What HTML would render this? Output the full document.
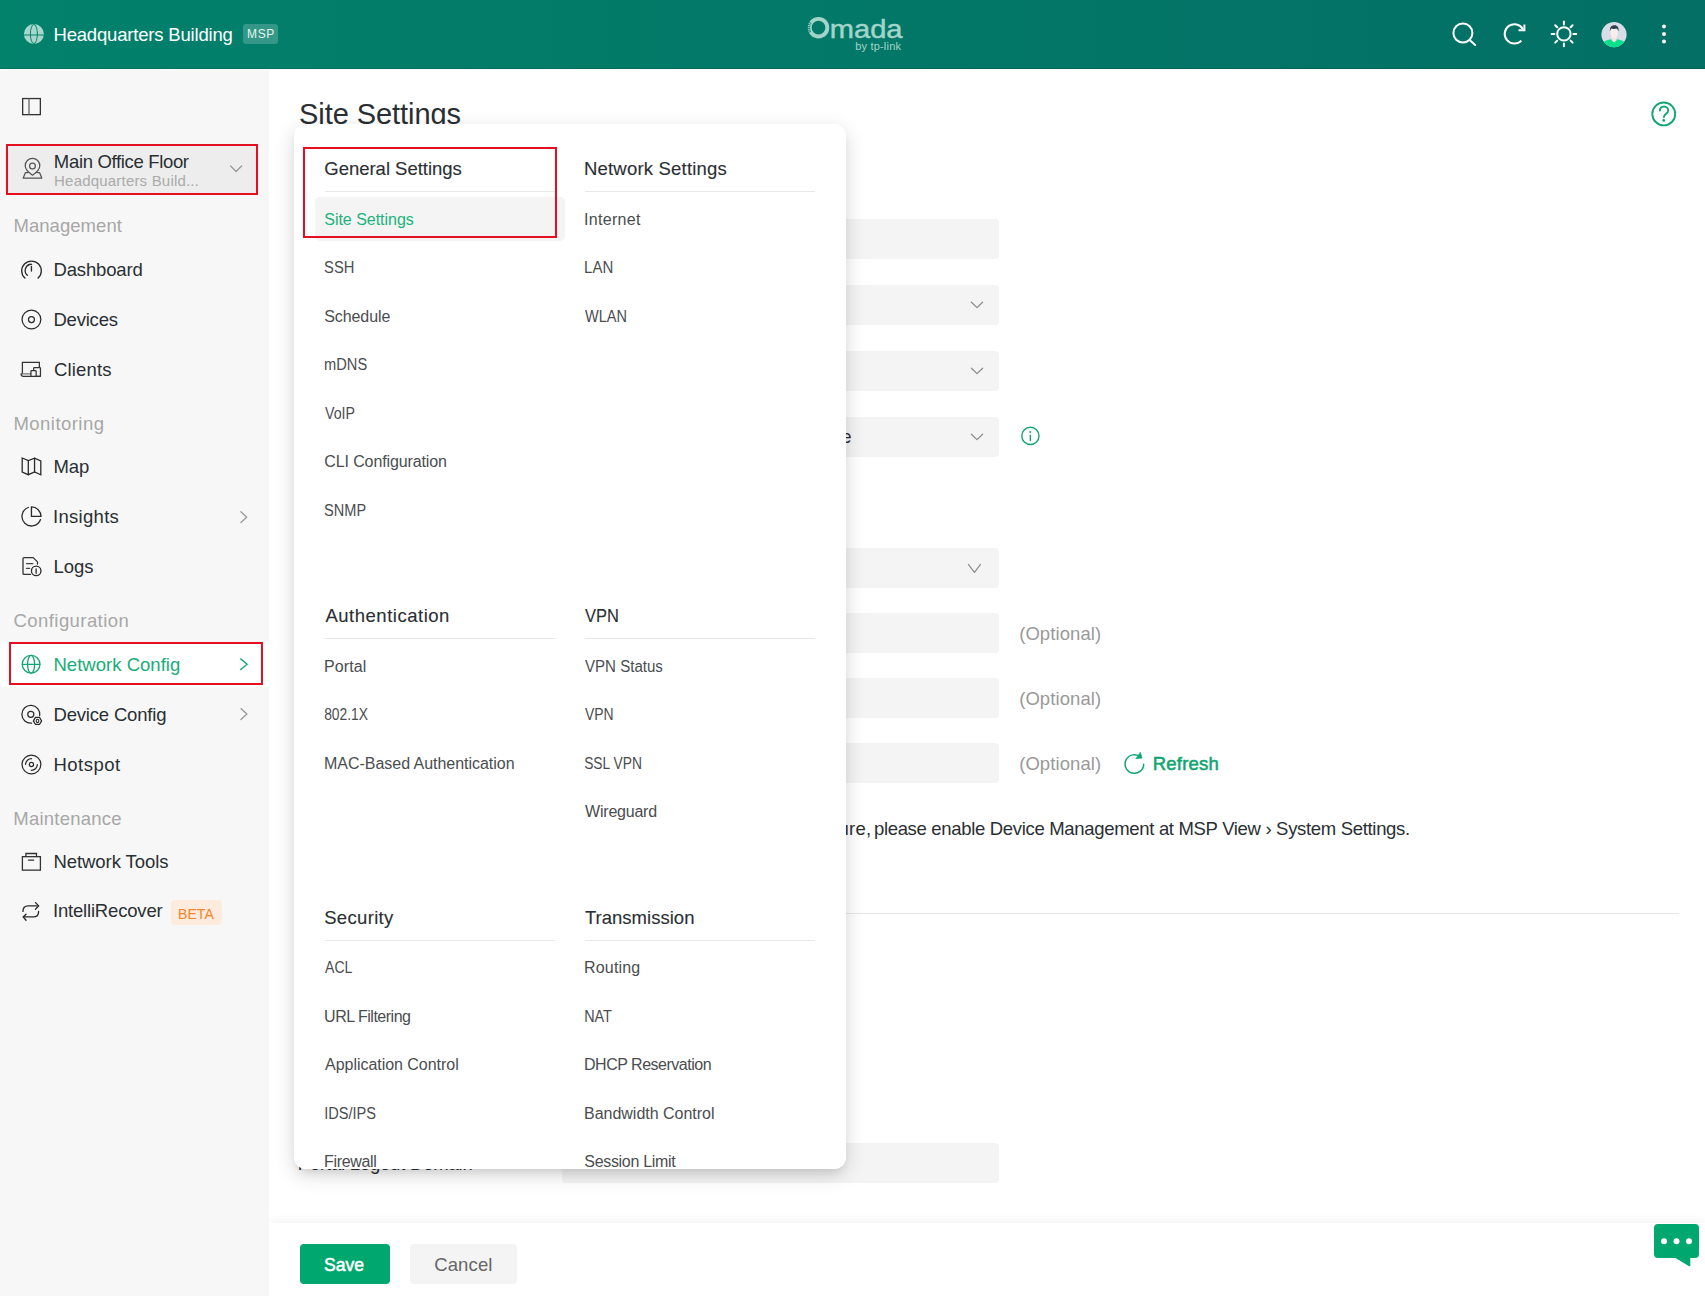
<!DOCTYPE html>
<html lang="en">
<head>
<meta charset="utf-8">
<title>Omada - Site Settings</title>
<style>
*{box-sizing:border-box;margin:0;padding:0}
html,body{width:1705px;height:1296px;overflow:hidden;background:#fff;font-family:"Liberation Sans",sans-serif}
.abs{position:absolute}
.t{position:absolute;white-space:pre;line-height:1;display:block}
#hdr{position:absolute;left:0;top:0;width:1705px;height:69px;background:linear-gradient(90deg,#02816b 0%,#036f65 100%);box-shadow:inset 0 -1px 0 rgba(0,0,0,.13)}
#side{position:absolute;left:0;top:70px;width:269px;height:1226px;background:#f7f7f7}
.red{position:absolute;border:2px solid #e60f21}
.fld{position:absolute;left:561.5px;width:437.5px;height:40px;background:#f4f4f4;border-radius:4px}
#pop{position:absolute;left:294px;top:124px;width:552px;height:1045px;background:#fff;border-radius:12px;overflow:hidden}
#popsh{position:absolute;left:294px;top:124px;width:552px;height:1045px;border-radius:12px;box-shadow:0 6px 8px -4px rgba(0,0,0,.10),0 6px 20px rgba(0,0,0,.16)}
.dv{position:absolute;height:1px;background:#e7e7e7;width:230px}
#foot{position:absolute;left:0;top:33px;width:1436px;height:74px;background:#fff;box-shadow:0 -3px 8px rgba(0,0,0,.045)}
svg{position:absolute;overflow:visible}
</style>
</head>
<body>
<!-- header -->
<div id="hdr"></div>
<!-- sidebar -->
<div id="side"></div>
<div class="abs" style="left:8px;top:146px;width:248px;height:47px;background:#ededed"></div>
<div class="red" style="left:6px;top:144px;width:252px;height:51px"></div>
<div class="abs" style="left:0;top:642px;width:269px;height:45px;background:#fff"></div>
<div class="red" style="left:9px;top:642px;width:254px;height:43px"></div>
<div class="abs" style="left:171px;top:900px;width:51px;height:25px;background:#fdebdd;border-radius:4px"></div>
<div class="abs" style="left:243px;top:24px;width:35px;height:20px;background:rgba(255,255,255,.2);border-radius:3px"></div>

<!-- main content behind popup -->
<div class="fld" style="top:219px"></div>
<div class="fld" style="top:285px"></div>
<div class="fld" style="top:351px"></div>
<div class="fld" style="top:417px"></div>
<div class="fld" style="top:548px"></div>
<div class="fld" style="top:613px"></div>
<div class="fld" style="top:678px"></div>
<div class="fld" style="top:743px"></div>
<div class="fld" style="top:1143px"></div>
<div class="abs" style="left:299px;top:913px;width:1380px;height:1px;background:#e8e8e8"></div>

<!-- footer -->
<div class="abs" style="left:269px;top:1190px;width:1436px;height:106px;overflow:hidden"><div id="foot"></div></div>
<div class="abs" style="left:300px;top:1244px;width:90px;height:40px;background:#00a870;border-radius:4px"></div>
<div class="abs" style="left:410px;top:1244px;width:107px;height:40px;background:#f4f4f4;border-radius:4px"></div>

<svg width="1705" height="1296" viewBox="0 0 1705 1296" style="left:0;top:0" fill="none" stroke-linecap="round" stroke-linejoin="round">
<!-- header: globe -->
<circle cx="33.9" cy="34" r="10" fill="#a6d6cc"/>
<ellipse cx="33.9" cy="34" rx="3.5" ry="9.6" stroke="#0a826c" stroke-width="1"/>
<path d="M24 35H43.8" stroke="#0a826c" stroke-width="1"/>
<!-- header: omada logo -->
<g stroke="#a3d4ca">
<circle cx="818.5" cy="27.7" r="8.8" stroke-width="3.9"/>
</g>
<g stroke="#037a69" stroke-width="0.9" stroke-linecap="butt">
<path d="M807.5 24.2l3.2 .9M807.1 26.3l3.2 .5M807 28.4l3.2 0M807.3 30.5l3.2-.5M807.9 32.5l3.1-1M808.4 22.2l3 1.3"/>
</g>
<!-- header right icons -->
<g stroke="#fff" stroke-width="2">
<circle cx="1462.9" cy="33" r="9.5"/>
<path d="M1469.9 40.2L1475.2 45"/>
<path d="M1522.9 29.2A9.7 9.7 0 1 0 1521.4 40.6" stroke-linecap="butt"/>
<path d="M1524.4 24.4V30.3H1518.5" stroke-linecap="butt" stroke-linejoin="miter"/>
<circle cx="1563.9" cy="33.9" r="6.7"/>
<path d="M1563.9 21.6v2.8M1563.9 43.4v2.8M1551.6 33.9h2.8M1573.4 33.9h2.8M1555.2 25.2l2 2M1570.6 40.6l2 2M1572.6 25.2l-2 2M1557.2 40.6l-2 2"/>
</g>
<circle cx="1664" cy="26.5" r="2" fill="#fff"/><circle cx="1664" cy="34" r="2" fill="#fff"/><circle cx="1664" cy="41.5" r="2" fill="#fff"/>
<!-- avatar -->
<g>
<clipPath id="av"><circle cx="1614" cy="34.6" r="12.6"/></clipPath>
<circle cx="1614" cy="34.6" r="12.6" fill="#d6dde6"/>
<g clip-path="url(#av)">
<path d="M1602 48V44.5c0-3 5-4.300 9-5.200h6c4 .9 9 2.200 9 5.200V48z" fill="#0be08d"/>
<path d="M1611.600 36h5v4.200l-2.500 2.300-2.500-2.300z" fill="#f3e4e0"/>
<ellipse cx="1614.200" cy="33" rx="3.700" ry="4.800" fill="#f8efed"/>
<path d="M1610 31.500c-.6-3.500 1.200-6.300 4.300-6.300s5 2.600 4.200 6.300c-.5-1.800-1.200-2.700-2-3-1.500.6-4 .6-5.200 0-.7.500-1.100 1.500-1.300 3z" fill="#2d3c46"/>
</g>
</g>
<!-- help -->
<g stroke="#12a672" stroke-width="1.900">
<circle cx="1663.750" cy="113.900" r="11.450"/>
<path d="M1659.900 110.600c0-2.400 1.800-4 4.100-4s4.200 1.600 4.200 3.800c0 3.100-4.300 3.700-4.300 6.700"/>
</g>
<circle cx="1663.700" cy="120.400" r="1.350" fill="#12a672"/>
<!-- sidebar toggle -->
<g stroke="#333" stroke-width="1.300" stroke-linejoin="miter" stroke-linecap="butt">
<rect x="22.650" y="98.550" width="17.700" height="16.100"/>
<path d="M29 98.500V114.600" stroke="#666"/>
</g>
<!-- site pin -->
<g stroke="#555" stroke-width="1.250" transform="translate(0 .7)">
<path d="M32.500 174.500c-4.200-2.900-7.300-5.800-7.300-9.500a7.300 7.300 0 0 1 14.600 0c0 3.700-3.100 6.600-7.300 9.500z"/>
<circle cx="32.450" cy="165.200" r="2.900"/>
<path d="M28 171.900H25.500L23.200 177.400H41.800L39.500 171.900H37"/>
</g>
<path d="M230.600 166L236.100 171.500L241.600 166" stroke="#999" stroke-width="1.300"/>
<!-- dashboard -->
<g stroke="#2b2b2b" stroke-width="1.350">
<path d="M24.900 278.100A9.800 9.800 0 1 1 38.100 278.100"/>
<path d="M27.300 275.300A6.300 6.300 0 0 1 31.600 264.300"/>
<path d="M31.450 266.500V271.100"/>
</g>
<!-- devices -->
<g stroke="#2b2b2b" stroke-width="1.250">
<circle cx="31.450" cy="319.500" r="9.400"/><circle cx="31.450" cy="319.500" r="3"/>
</g>
<!-- clients -->
<g stroke="#333" stroke-width="1.250" stroke-linejoin="miter">
<path d="M22.400 373.600V362.450H39.350V367.300"/>
<path d="M21.100 373.900H30.800" stroke="#777"/>
<path d="M21.100 374c.1 1.600 .9 2.300 2.100 2.300H40.400"/>
<rect x="33.650" y="367.500" width="6.800" height="8.800" rx=".8"/>
<rect x="30.950" y="370.500" width="5.200" height="5.800" rx=".7" fill="#f7f7f7"/>
</g>
<!-- map -->
<g stroke="#2b2b2b" stroke-width="1.300" stroke-linejoin="miter">
<path d="M22.200 458L28.300 460.600L34.550 458.200L40.800 460.900V474.800L34.550 472L28.300 474.700L22.200 472Z"/>
<path d="M28.300 460.600V474.700M34.550 458.200V472"/>
</g>
<!-- insights -->
<g stroke="#2b2b2b" stroke-width="1.300">
<path d="M28.300 507.500A9.500 9.500 0 1 0 40.500 519.500"/>
<path d="M31.450 506.900V516.450H41A9.550 9.550 0 0 0 31.450 506.900Z" stroke-linejoin="miter"/>
</g>
<path d="M240.900 511.800L246.700 517.150L240.900 522.500" stroke="#999" stroke-width="1.300"/>
<!-- logs -->
<g stroke="#333" stroke-width="1.300">
<path d="M30.500 574.400H24c-.6 0-1-.4-1-1V558.600c0-.6 .4-1 1-1h9.200L37.500 561.900V564"/>
<path d="M26.500 563.600H32.800M26.500 568.400H29.600" stroke="#444"/>
<circle cx="36.200" cy="570.900" r="4.750" stroke="#2b2b2b"/>
<path d="M36.150 568.900V573.300" stroke="#2b2b2b"/>
</g>
<!-- network config globe -->
<g stroke="#12a672" stroke-width="1.300">
<circle cx="31.100" cy="664.300" r="8.850"/>
<ellipse cx="31.100" cy="664.300" rx="3.500" ry="8.850"/>
<path d="M22.300 664.300H39.900"/>
</g>
<path d="M240.700 658.900L247.200 664.200L240.700 669.500" stroke="#12a672" stroke-width="1.400"/>
<!-- device config -->
<g stroke="#2b2b2b" stroke-width="1.250">
<path d="M39.700 715.500A8.950 8.950 0 1 0 31.600 723.200"/>
<circle cx="30.800" cy="714.300" r="3.050"/>
<path d="M33.400 720.900L35.450 717.350H39.550L41.600 720.900L39.550 724.450H35.450Z" stroke-linejoin="miter"/>
<ellipse cx="37.500" cy="720.900" rx="1.300" ry="1.650" stroke-width="1.1"/>
</g>
<path d="M240.900 708.600L246.900 714.100L240.900 719.600" stroke="#999" stroke-width="1.300"/>
<!-- hotspot -->
<g stroke="#2b2b2b" stroke-width="1.250">
<circle cx="31.450" cy="764.500" r="9.400"/>
<circle cx="31.450" cy="764.500" r="2.100"/>
<path d="M25.600 764.300A5.900 5.900 0 0 1 31.600 758.600M37.300 764.700A5.900 5.900 0 0 1 31.300 770.400"/>
</g>
<!-- network tools -->
<g stroke="#333" stroke-width="1.300" stroke-linejoin="miter">
<rect x="22.400" y="856.650" width="18" height="13.500"/>
<path d="M25.900 856.600V853.500H36.500V856.600"/>
<path d="M28.500 860.200H33.600"/>
</g>
<!-- intellirecover -->
<g stroke="#2b2b2b" stroke-width="1.350">
<path d="M22.950 911.400c0-3.500 1.800-5.500 5.200-5.500H38.400"/>
<path d="M35.500 902.600L38.700 905.900L35.500 909.300"/>
<path d="M38.600 911.400c0 3.500-1.800 5.500-5.200 5.500H23.400"/>
<path d="M26 914.200L23.200 916.900L26 920.300"/>
</g>
<!-- field chevrons -->
<g stroke="#8c8c8c" stroke-width="1.300">
<path d="M971.400 302.300L977 307.600L982.600 302.300"/>
<path d="M971.400 368.300L977 373.600L982.600 368.300"/>
<path d="M971.400 434.300L977 439.600L982.600 434.300"/>
<path d="M968.400 564.400L974.450 572.300L980.500 564.400" stroke-width="1.200"/>
</g>
<!-- info -->
<g stroke="#12a672" stroke-width="1.400">
<circle cx="1030.400" cy="435.900" r="8.600"/>
<path d="M1030.350 435.200V440.600"/>
</g>
<circle cx="1030.300" cy="432" r="1" fill="#12a672"/>
<!-- refresh green -->
<path d="M1143.700 764.200A9.300 9.300 0 1 1 1140.600 757.100" stroke="#12a672" stroke-width="1.500"/>
<path d="M1140.400 752.700L1142 758L1136.300 758.600Z" fill="#12a672" stroke="#12a672" stroke-width=".8"/>
<!-- chat -->
<path d="M1658 1224H1695a4 4 0 0 1 4 4v26a4 4 0 0 1-4 4H1690.300V1265.500a.8 .8 0 0 1-1.200 .7L1675.500 1258H1658a4 4 0 0 1-4-4v-26a4 4 0 0 1 4-4z" fill="#00a870"/>
<circle cx="1664" cy="1241.300" r="3" fill="#fff"/><circle cx="1676.500" cy="1241.300" r="3" fill="#fff"/><circle cx="1689" cy="1241.300" r="3" fill="#fff"/>
</svg>


<span class="t" style="left:53.46px;top:26.00px;font-size:18.5px;color:#ffffff;letter-spacing:-0.185px;">Headquarters Building</span>
<span class="t" style="left:247.08px;top:28.00px;font-size:12px;color:#e6f4f0;letter-spacing:0.635px;">MSP</span>
<span class="t" style="left:829.66px;top:16.00px;font-size:26px;color:#a3d4ca;transform:scaleX(1.1178);transform-origin:2.04px 50%;-webkit-text-stroke:0.45px #a3d4ca;">mada</span>
<span class="t" style="left:855.26px;top:41.00px;font-size:11px;color:#a3d4ca;letter-spacing:0.185px;">by tp-link</span>
<span class="t" style="left:53.86px;top:153.00px;font-size:18.5px;color:#2a2f33;letter-spacing:-0.335px;">Main Office Floor</span>
<span class="t" style="left:54.10px;top:173.00px;font-size:15px;color:#aaaaaa;letter-spacing:0.194px;">Headquarters Build...</span>
<span class="t" style="left:13.46px;top:217.00px;font-size:18.5px;color:#a7a7a7;letter-spacing:0.047px;">Management</span>
<span class="t" style="left:53.46px;top:261.00px;font-size:18.5px;color:#2a2f33;letter-spacing:-0.156px;">Dashboard</span>
<span class="t" style="left:53.46px;top:311.00px;font-size:18.5px;color:#2a2f33;letter-spacing:-0.216px;">Devices</span>
<span class="t" style="left:53.88px;top:361.00px;font-size:18.5px;color:#2a2f33;letter-spacing:0.169px;">Clients</span>
<span class="t" style="left:13.46px;top:415.00px;font-size:18.5px;color:#a7a7a7;letter-spacing:0.456px;">Monitoring</span>
<span class="t" style="left:53.46px;top:458.00px;font-size:18.5px;color:#2a2f33;letter-spacing:-0.074px;">Map</span>
<span class="t" style="left:52.97px;top:508.00px;font-size:18.5px;color:#2a2f33;letter-spacing:0.3px;">Insights</span>
<span class="t" style="left:53.46px;top:558.00px;font-size:18.5px;color:#2a2f33;letter-spacing:0.018px;">Logs</span>
<span class="t" style="left:13.58px;top:612.00px;font-size:18.5px;color:#a7a7a7;letter-spacing:0.423px;">Configuration</span>
<span class="t" style="left:53.46px;top:656.00px;font-size:18.5px;color:#17ad78;letter-spacing:0.027px;">Network Config</span>
<span class="t" style="left:53.46px;top:706.00px;font-size:18.5px;color:#2a2f33;letter-spacing:-0.175px;">Device Config</span>
<span class="t" style="left:53.46px;top:756.00px;font-size:18.5px;color:#2a2f33;letter-spacing:0.473px;">Hotspot</span>
<span class="t" style="left:13.36px;top:810.00px;font-size:18.5px;color:#a7a7a7;letter-spacing:0.215px;">Maintenance</span>
<span class="t" style="left:53.46px;top:853.00px;font-size:18.5px;color:#2a2f33;letter-spacing:-0.066px;">Network Tools</span>
<span class="t" style="left:52.97px;top:902.00px;font-size:18.5px;color:#2a2f33;letter-spacing:-0.184px;">IntelliRecover</span>
<span class="t" style="left:178.10px;top:906.00px;font-size:15px;color:#f5842b;transform:scaleX(0.9376);transform-origin:1.30px 50%;">BETA</span>
<span class="t" style="left:299.10px;top:100.00px;font-size:29px;color:#2a2f33;letter-spacing:-0.069px;">Site Settings</span>
<span class="t" style="left:841.35px;top:428.00px;font-size:18.5px;color:#2a2f33;">e</span>
<span class="t" style="left:1019.15px;top:625.00px;font-size:18.5px;color:#999999;letter-spacing:0.091px;">(Optional)</span>
<span class="t" style="left:1019.15px;top:690.00px;font-size:18.5px;color:#999999;letter-spacing:0.091px;">(Optional)</span>
<span class="t" style="left:1019.15px;top:755.00px;font-size:18.5px;color:#999999;letter-spacing:0.091px;">(Optional)</span>
<span class="t" style="left:1152.66px;top:755.00px;font-size:18.5px;color:#10a571;letter-spacing:0.229px;-webkit-text-stroke:0.55px #10a571;">Refresh</span>
<span class="t" style="left:838.51px;top:820.00px;font-size:18.5px;color:#2a2f33;letter-spacing:0.234px;">ure,</span>
<span class="t" style="left:873.91px;top:820.00px;font-size:18.5px;color:#2a2f33;letter-spacing:-0.318px;">please enable Device Management at MSP View › System Settings.</span>
<span class="t" style="left:297.86px;top:1155.00px;font-size:18.5px;color:#2a2f33;letter-spacing:-0.216px;">Portal Logout Domain</span>
<span class="t" style="left:324.19px;top:1256.00px;font-size:18.5px;color:#ffffff;transform:scaleX(0.9503);transform-origin:1.21px 50%;-webkit-text-stroke:0.55px #ffffff;">Save</span>
<span class="t" style="left:434.18px;top:1256.00px;font-size:18.5px;color:#666666;letter-spacing:0.132px;">Cancel</span>

<!-- popup -->
<div id="popsh"></div>
<div id="pop">
<div class="abs" style="left:21px;top:73px;width:250px;height:44px;background:#f4f4f4;border-radius:5px"></div>
<div class="dv" style="left:31px;top:67px"></div><div class="dv" style="left:291px;top:67px"></div>
<div class="dv" style="left:31px;top:514px"></div><div class="dv" style="left:291px;top:514px"></div>
<div class="dv" style="left:31px;top:816px"></div><div class="dv" style="left:291px;top:816px"></div>
<div class="red" style="left:9px;top:23px;width:254px;height:91px"></div>
<span class="t" style="left:30.28px;top:36.00px;font-size:18.5px;color:#2b2f33;letter-spacing:-0.014px;-webkit-text-stroke:0.12px #2b2f33;">General Settings</span>
<span class="t" style="left:289.96px;top:36.00px;font-size:18.5px;color:#2b2f33;letter-spacing:0.2px;-webkit-text-stroke:0.12px #2b2f33;">Network Settings</span>
<span class="t" style="left:31.48px;top:483.00px;font-size:18.5px;color:#2b2f33;letter-spacing:0.512px;-webkit-text-stroke:0.12px #2b2f33;">Authentication</span>
<span class="t" style="left:291.05px;top:483.00px;font-size:18.5px;color:#2b2f33;transform:scaleX(0.8894);transform-origin:0.35px 50%;-webkit-text-stroke:0.12px #2b2f33;">VPN</span>
<span class="t" style="left:30.19px;top:785.00px;font-size:18.5px;color:#2b2f33;letter-spacing:0.329px;-webkit-text-stroke:0.12px #2b2f33;">Security</span>
<span class="t" style="left:290.93px;top:785.00px;font-size:18.5px;color:#2b2f33;letter-spacing:0.019px;-webkit-text-stroke:0.12px #2b2f33;">Transmission</span>
<span class="t" style="left:30.28px;top:88.00px;font-size:16px;color:#1bb27c;letter-spacing:-0.024px;">Site Settings</span>
<span class="t" style="left:30.38px;top:136.00px;font-size:16px;color:#4a4d50;transform:scaleX(0.9193);transform-origin:1.12px 50%;">SSH</span>
<span class="t" style="left:30.28px;top:185.00px;font-size:16px;color:#4a4d50;letter-spacing:-0.095px;">Schedule</span>
<span class="t" style="left:30.19px;top:233.00px;font-size:16px;color:#4a4d50;transform:scaleX(0.9141);transform-origin:1.21px 50%;">mDNS</span>
<span class="t" style="left:31.07px;top:282.00px;font-size:16px;color:#4a4d50;transform:scaleX(0.8865);transform-origin:0.33px 50%;">VoIP</span>
<span class="t" style="left:30.32px;top:330.00px;font-size:16px;color:#4a4d50;letter-spacing:-0.122px;">CLI Configuration</span>
<span class="t" style="left:30.28px;top:379.00px;font-size:16px;color:#4a4d50;transform:scaleX(0.9104);transform-origin:1.12px 50%;">SNMP</span>
<span class="t" style="left:289.89px;top:88.00px;font-size:16px;color:#4a4d50;letter-spacing:0.342px;">Internet</span>
<span class="t" style="left:290.04px;top:136.00px;font-size:16px;color:#4a4d50;transform:scaleX(0.9357);transform-origin:1.36px 50%;">LAN</span>
<span class="t" style="left:291.11px;top:185.00px;font-size:16px;color:#4a4d50;transform:scaleX(0.9072);transform-origin:0.29px 50%;">WLAN</span>
<span class="t" style="left:30.04px;top:535.00px;font-size:16px;color:#4a4d50;letter-spacing:0.078px;">Portal</span>
<span class="t" style="left:30.33px;top:583.00px;font-size:16px;color:#4a4d50;transform:scaleX(0.8642);transform-origin:1.07px 50%;">802.1X</span>
<span class="t" style="left:30.04px;top:632.00px;font-size:16px;color:#4a4d50;letter-spacing:-0.029px;">MAC-Based Authentication</span>
<span class="t" style="left:291.07px;top:535.00px;font-size:16px;color:#4a4d50;transform:scaleX(0.9414);transform-origin:0.33px 50%;">VPN Status</span>
<span class="t" style="left:291.07px;top:583.00px;font-size:16px;color:#4a4d50;transform:scaleX(0.8704);transform-origin:0.33px 50%;">VPN</span>
<span class="t" style="left:290.28px;top:632.00px;font-size:16px;color:#4a4d50;transform:scaleX(0.8614);transform-origin:1.12px 50%;">SSL VPN</span>
<span class="t" style="left:291.11px;top:680.00px;font-size:16px;color:#4a4d50;letter-spacing:-0.232px;">Wireguard</span>
<span class="t" style="left:31.11px;top:836.00px;font-size:16px;color:#4a4d50;transform:scaleX(0.8781);transform-origin:0.29px 50%;">ACL</span>
<span class="t" style="left:30.10px;top:885.00px;font-size:16px;color:#4a4d50;letter-spacing:-0.489px;">URL Filtering</span>
<span class="t" style="left:31.11px;top:933.00px;font-size:16px;color:#4a4d50;letter-spacing:-0.04px;">Application Control</span>
<span class="t" style="left:29.89px;top:982.00px;font-size:16px;color:#4a4d50;transform:scaleX(0.9112);transform-origin:1.51px 50%;">IDS/IPS</span>
<span class="t" style="left:30.04px;top:1030.00px;font-size:16px;color:#4a4d50;letter-spacing:-0.334px;">Firewall</span>
<span class="t" style="left:290.04px;top:836.00px;font-size:16px;color:#4a4d50;letter-spacing:0.167px;">Routing</span>
<span class="t" style="left:290.04px;top:885.00px;font-size:16px;color:#4a4d50;transform:scaleX(0.8996);transform-origin:1.36px 50%;">NAT</span>
<span class="t" style="left:290.04px;top:933.00px;font-size:16px;color:#4a4d50;letter-spacing:-0.485px;">DHCP Reservation</span>
<span class="t" style="left:290.04px;top:982.00px;font-size:16px;color:#4a4d50;letter-spacing:-0.019px;">Bandwidth Control</span>
<span class="t" style="left:290.28px;top:1030.00px;font-size:16px;color:#4a4d50;letter-spacing:-0.307px;">Session Limit</span>
</div>
</body>
</html>
